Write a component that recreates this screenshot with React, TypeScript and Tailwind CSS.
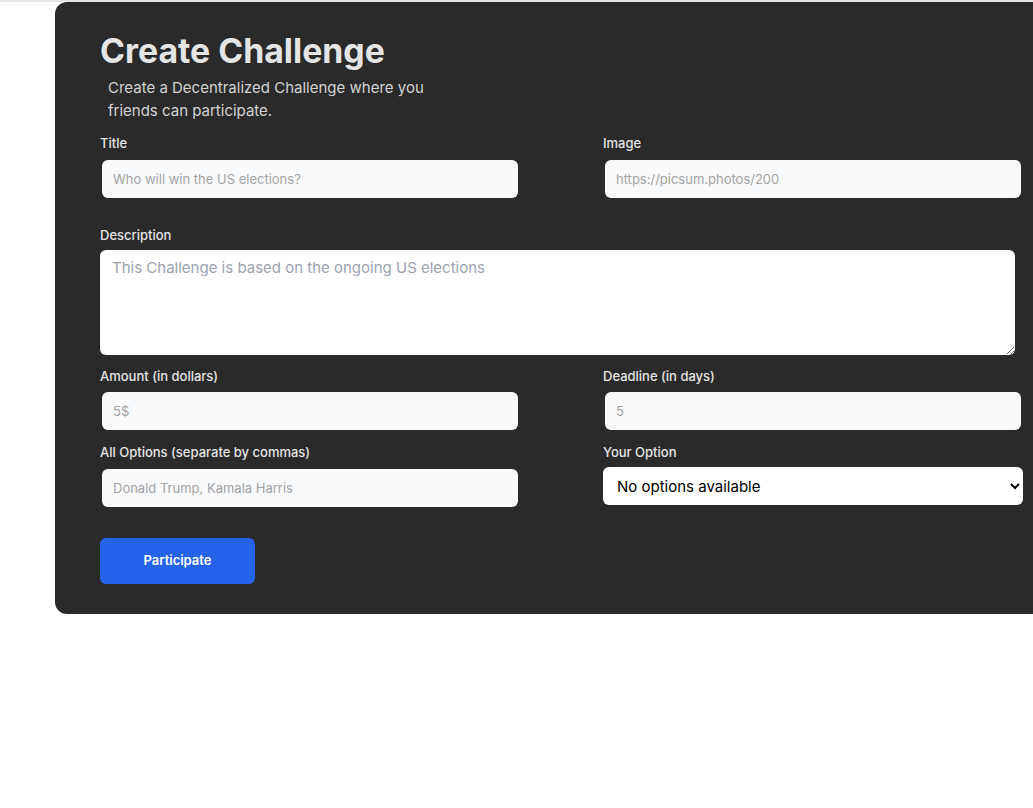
import type { ReactNode } from "react";

const inputCls =
  "m-0.5 h-[38px] rounded-md bg-[#f9fafb] px-[11px] text-[13px] text-gray-700 placeholder:text-[#a3a3a3] outline-none";

function Field({ label, children, gap = "mt-[5px]" }: { label: string; children: ReactNode; gap?: string }) {
  return (
    <div className="flex flex-col">
      <label className="text-[13px] leading-5 font-medium text-[#e5e5e5]">{label}</label>
      <div className={`flex flex-col ${gap}`}>{children}</div>
    </div>
  );
}

export default function App() {
  return (
    <div
      className="min-h-screen w-full overflow-hidden bg-white"
      style={{ fontFamily: "Inter, 'Noto Sans', sans-serif" }}
    >
      <div className="h-[2px] w-full bg-[#e6e6e6]" />
      <div className="ml-[55px] w-[1010px] rounded-xl bg-[#2a2a2a] pt-[28px] pb-[30px] pl-[45px]">
        <h1 className="text-[33.8px] leading-[41px] font-bold text-[#e5e5e5]">Create Challenge</h1>
        <p className="mt-[5px] ml-2 max-w-xs text-[15px] leading-[23px] text-[#d4d4d4]">
          Create a Decentralized Challenge where you friends can participate.
        </p>

        <div className="mt-[11px] grid grid-cols-[420px_420px] gap-x-[83px]">
          <Field label="Title">
            <input className={inputCls} placeholder="Who will win the US elections?" />
          </Field>
          <Field label="Image">
            <input className={inputCls} placeholder="https://picsum.photos/200" />
          </Field>
        </div>

        <div className="mt-[25px] w-[915px]">
          <Field label="Description">
            <textarea
              className="h-[105px] rounded-md bg-white px-3 py-2 text-[15px] leading-[19px] text-gray-700 placeholder:text-[#9ca3af] outline-none"
              placeholder="This Challenge is based on the ongoing US elections"
            />
          </Field>
        </div>

        <div className="mt-[11px] grid grid-cols-[420px_420px] gap-x-[83px]">
          <Field label="Amount (in dollars)" gap="mt-[4px]">
            <input className={inputCls} placeholder="5$" />
          </Field>
          <Field label="Deadline (in days)" gap="mt-[4px]">
            <input className={inputCls} placeholder="5" />
          </Field>
        </div>

        <div className="mt-[10px] grid grid-cols-[420px_420px] gap-x-[83px]">
          <Field label="All Options (separate by commas)">
            <input className={inputCls} placeholder="Donald Trump, Kamala Harris" />
          </Field>
          <Field label="Your Option">
            <select className="h-[38px] rounded-md bg-white pl-[10px] pr-2 text-[15px] text-black outline-none">
              <option>No options available</option>
            </select>
          </Field>
        </div>

        <button className="mt-[29px] h-[46px] w-[155px] rounded-md bg-[#2563eb] text-[13px] font-semibold text-white">
          Participate
        </button>
      </div>
    </div>
  );
}
